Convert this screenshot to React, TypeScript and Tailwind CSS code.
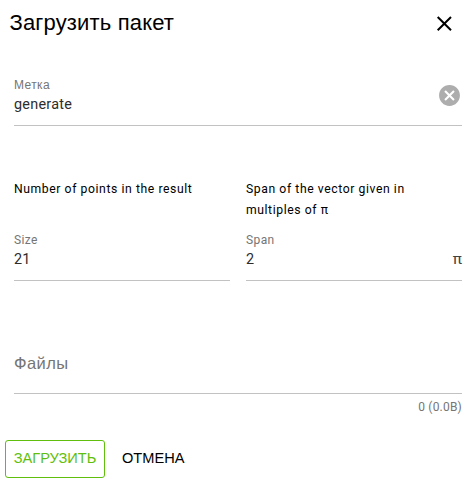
import type { ReactNode } from 'react';

const roboto = "font-['Roboto','Liberation_Sans',sans-serif]";
const liberation = "font-['Liberation_Sans',sans-serif]";

function Field({ label, labelClass, value, children }: { label: string; labelClass: string; value: string; children?: ReactNode }) {
  return (
    <div className="flex h-14 items-start justify-between border-b border-[#c2c2c2] pt-[6px]">
      <div>
        <div className={`text-[12px] leading-[18px] text-[#757575] ${labelClass}`}>{label}</div>
        <div className={`text-[14.4px] leading-[22px] tracking-[0.25px] text-[#2c2c2c] ${roboto}`}>{value}</div>
      </div>
      {children}
    </div>
  );
}

export default function App() {
  return (
    <div className={`h-[483px] w-[476px] overflow-hidden bg-white text-black ${roboto}`}>
      <header className="flex h-[46px] items-center justify-between pr-[22px] pl-[9.5px]">
        <h1 className={`text-[22px] leading-[30px] tracking-[0.16px] ${liberation}`}>Загрузить пакет</h1>
        <button aria-label="Закрыть" className="mt-[2px] h-5 w-5">
          <svg viewBox="0 0 20 20" className="h-5 w-5" fill="none" stroke="currentColor" strokeWidth="2">
            <path d="M3.7 3 17 16.3M17 3 3.7 16.3" />
          </svg>
        </button>
      </header>
      <main className="pr-[14px] pl-[14px] pt-6">
        <Field label="Метка" labelClass={`tracking-[0.4px] ${liberation}`} value="generate">
          <svg viewBox="0 0 24 24" className="mt-[7px] h-[25px] w-[25px]" fill="#adadad">
            <path d="M12 2C6.47 2 2 6.47 2 12s4.47 10 10 10 10-4.47 10-10S17.53 2 12 2zm5 13.59L15.59 17 12 13.41 8.41 17 7 15.59 10.59 12 7 8.41 8.41 7 12 10.59 15.59 7 17 8.41 13.41 12 17 15.59z" />
          </svg>
        </Field>
        <div className="mt-[53px] grid grid-cols-2 gap-4">
          <p className="h-[46px] text-[12.2px] leading-[21px] tracking-[0.58px]">Number of points in the result</p>
          <p className="h-[46px] pr-10 text-[12.2px] leading-[21px] tracking-[0.58px]">Span of the vector given in multiples of π</p>
        </div>
        <div className="grid grid-cols-2 gap-4">
          <Field label="Size" labelClass="tracking-[0.4px]" value="21" />
          <Field label="Span" labelClass="tracking-[0.4px]" value="2">
            <span className="pt-[18px] text-[15.5px] leading-[20px] text-[#424242]">π</span>
          </Field>
        </div>
        <div className={`mt-14 flex h-[57px] items-center border-b border-[#c2c2c2] pb-1 text-[16.5px] tracking-[0.4px] text-[#757575] ${liberation}`}>
          Файлы
        </div>
        <div className="h-[46px] pt-1 text-right text-[12px] leading-[18px] tracking-[0.2px] text-[#757575]">0 (0.0B)</div>
      </main>
      <footer className={`flex pl-[5px] text-[14.6px] ${liberation}`}>
        <button className="h-[38px] w-[100px] rounded-[3px] border border-[#5fbf0c] pb-px text-[#5fbf0c]">ЗАГРУЗИТЬ</button>
        <button className="ml-[17px] h-[38px] pb-px">ОТМЕНА</button>
      </footer>
    </div>
  );
}
